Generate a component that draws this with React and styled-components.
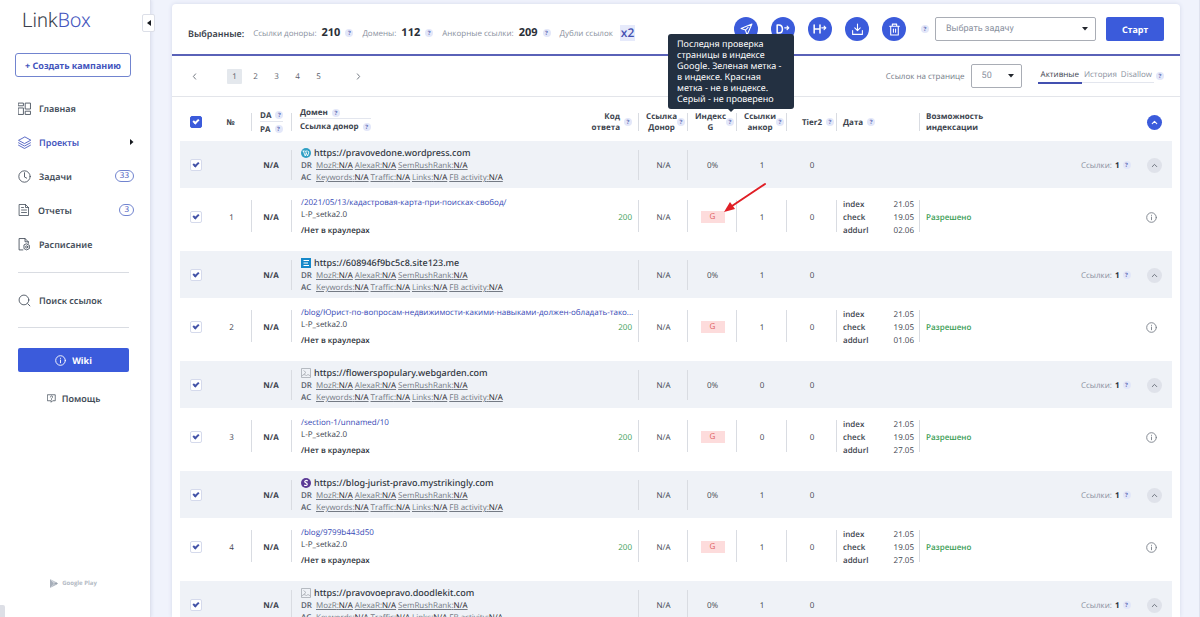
import React from "react";
import styled, { createGlobalStyle, css } from "styled-components";

const c = {
  blue: "#3b5bdb",
  indigo: "#4355bd",
  text: "#3c434d",
  dark: "#2b3038",
  muted: "#8a919e",
  line: "#d9dce2",
  green: "#3a9d55",
  page: "#f0f3fc",
  row: "#eff2f7",
};

const titleFont = `"Noto Sans", "Open Sans", sans-serif`;
const bodyFont = `"Open Sans", "Noto Sans", sans-serif`;

const GlobalStyle = createGlobalStyle`
  *, *::before, *::after { box-sizing: border-box; }
  body { margin: 0; background: ${c.page}; }
  body, button, select, input {
    font-family: ${bodyFont};
    font-size: 8px;
    color: ${c.text};
    text-rendering: geometricPrecision;
  }
  button { padding: 0; border: 0; background: none; cursor: pointer; }
  a { color: inherit; text-decoration: none; }
  svg { display: block; flex: none; }
`;

const Page = styled.div`
  display: flex;
  height: 100vh;
  overflow: hidden;
`;

/* ---------- sidebar ---------- */

const Sidebar = styled.aside`
  position: relative;
  flex: none;
  display: flex;
  flex-direction: column;
  width: 151px;
  padding: 8px 21px 28px 18px;
  background: #fff;
  border-right: 1px solid #dfe2ee;
  box-shadow: 1px 0 3px #dde1f0;
`;

const Logo = styled.a`
  padding-left: 4px;
  font: 300 20px/24px Roboto, sans-serif;
  color: #3a3f4c;
  span { color: ${c.indigo}; }
`;

const CollapseButton = styled.button`
  position: absolute;
  top: 14px;
  right: -5px;
  display: grid;
  place-items: center;
  width: 13px;
  height: 18px;
  background: #fff;
  border: 1px solid #dcdfe8;
  border-radius: 2px;
`;

const CreateButton = styled.button`
  height: 24px;
  margin: 21px -2px 14px -3px;
  border: 1px solid #7184cf;
  border-radius: 3px;
  font-family: ${titleFont};
  font-size: 9px;
  font-weight: 700;
  color: ${c.indigo};
  white-space: nowrap;
`;

const Menu = styled.nav`
  display: flex;
  flex-direction: column;
  margin: 0 -5px 1px 0;
`;

const MenuItem = styled.a`
  display: flex;
  align-items: center;
  gap: 8px;
  height: 34px;
  font-family: ${titleFont};
  font-size: 9px;
  font-weight: 600;
  color: ${(p) => (p.$active ? c.indigo : "#434d59")};
`;

const MenuLabel = styled.span`
  flex: 1;
`;

const Count = styled.span`
  padding: 0 4px;
  border: 1px solid #7184cf;
  border-radius: 6px;
  font-size: 8px;
  line-height: 10px;
  font-weight: 400;
  color: ${c.indigo};
`;

const Rule = styled.hr`
  width: 100%;
  margin: 10px 0;
  border: 0;
  border-top: 1px solid ${c.line};
`;

const WikiButton = styled.button`
  display: flex;
  align-items: center;
  justify-content: center;
  gap: 6px;
  height: 24px;
  margin-top: 10px;
  border-radius: 2px;
  background: ${c.blue};
  color: #fff;
  font-family: ${titleFont};
  font-size: 9px;
  font-weight: 700;
`;

const HelpLink = styled(MenuItem)`
  justify-content: center;
  gap: 6px;
  margin-top: 9px;
`;

const StoreLink = styled.a`
  display: flex;
  align-items: center;
  justify-content: center;
  gap: 4px;
  margin-top: auto;
  font-size: 6px;
  line-height: 12px;
  font-weight: 700;
  color: #b3bac4;
`;

const CornerTab = styled.div`
  position: absolute;
  left: 0;
  bottom: 0;
  width: 5px;
  height: 12px;
  background: #dddfe6;
  border-radius: 0 2px 0 0;
`;

/* ---------- card ---------- */

const Main = styled.main`
  flex: 1;
  min-width: 0;
  padding: 4px 19px 0 21px;
  border-right: 1px solid #dfe2ee;
`;

const Card = styled.section`
  height: 100%;
  background: #fff;
  border-radius: 4px 4px 0 0;
  box-shadow: 0 0 4px #d3d8ea;
  overflow: hidden;
`;

const TopBar = styled.header`
  display: flex;
  align-items: center;
  justify-content: space-between;
  height: 52px;
  padding: 0 16px;
  border-bottom: 2px solid #5a62b8;
`;

const Stats = styled.div`
  display: flex;
  align-items: center;
  gap: 9px;
  padding-top: 8px;
  white-space: nowrap;
`;

const StatsTitle = styled.strong`
  font-family: ${titleFont};
  font-size: 9px;
  font-weight: 600;
  color: ${c.text};
`;

const Stat = styled.span`
  display: flex;
  align-items: center;
  gap: 5px;
  color: ${c.muted};
  b {
    font-size: 11px;
    line-height: 16px;
    font-weight: 700;
    color: ${c.dark};
  }
`;

const Duplicates = styled.button`
  margin-left: 2px;
  padding: 0 1px;
  background: #e6eafb;
  color: #4350b0;
  font-size: 12px;
  line-height: 16px;
  font-weight: 600;
`;

const Actions = styled.div`
  display: flex;
  align-items: center;
  gap: 6px;
`;

const RoundButtons = styled.div`
  display: flex;
  gap: 13px;
  margin-right: 9px;
`;

const RoundButton = styled.button`
  display: grid;
  place-items: center;
  width: 24px;
  height: 24px;
  border-radius: 50%;
  background: ${c.blue};
`;

const HelpDot = styled.button`
  flex: none;
  position: relative;
  width: 8px;
  height: 8px;
  border-radius: 50%;
  background: #e3e7f9;
  color: #5f6cb5;
  font-size: 6px;
  line-height: 8px;
  font-weight: 700;
`;

const SelectBox = styled.label`
  position: relative;
  display: block;
  width: ${(p) => (p.$small ? "51px" : "161px")};
  svg { position: absolute; right: 8px; top: 10px; pointer-events: none; }
  select {
    appearance: none;
    display: block;
    width: 100%;
    height: 24px;
    padding: 0 10px;
    border: 1px solid #a9adb5;
    border-radius: 2px;
    background: #fff;
    font-family: Roboto, sans-serif;
    font-size: 9px;
    color: ${c.muted};
  }
`;

const StartButton = styled.button`
  width: 58px;
  height: 24px;
  margin-left: 4px;
  border-radius: 2px;
  background: ${c.blue};
  color: #fff;
  font-family: ${titleFont};
  font-size: 9px;
  font-weight: 700;
`;

const PagerBar = styled.div`
  display: flex;
  align-items: center;
  justify-content: space-between;
  height: 41px;
  padding: 0 16px 0 15px;
  border-bottom: 1px solid #e3e5ea;
`;

const Pager = styled.nav`
  display: flex;
  align-items: center;
  gap: 25px;
`;

const Pages = styled.div`
  display: flex;
  gap: 6px;
`;

const PageButton = styled.button`
  display: grid;
  place-items: center;
  width: 15px;
  height: 15px;
  border-radius: 1px;
  background: ${(p) => (p.$active ? "#e4e8ed" : "transparent")};
  color: #59606b;
`;

const PerPage = styled.div`
  display: flex;
  align-items: center;
  gap: 6px;
  color: #747b87;
`;

const Tabs = styled.div`
  display: flex;
  align-items: center;
  margin-left: 10px;
  ${HelpDot} { margin-left: 2px; }
`;

const Tab = styled.a`
  align-self: flex-start;
  padding: 0 ${(p) => (p.$active ? 3 : 2)}px;
  line-height: 14px;
  border-bottom: ${(p) => (p.$active ? "2px solid #4350b0" : "1px solid #e3e6ee")};
  color: ${(p) => (p.$active ? c.text : c.muted)};
`;

/* ---------- table ---------- */

const Table = styled.table`
  width: calc(100% - 16px);
  margin: 0 8px;
  table-layout: fixed;
  border-collapse: collapse;
`;

const divider = css`
  background-image: linear-gradient(${c.line}, ${c.line});
  background-repeat: no-repeat;
`;

const HeadRow = styled.tr`
  height: 44px;
`;

const HeadCell = styled.th`
  padding: 6px ${(p) => p.$padRight ?? p.$pad ?? 0}px 0 ${(p) => p.$pad || 0}px;
  font-weight: 700;
  line-height: 11px;
  text-align: ${(p) => p.$align || "center"};
  color: ${c.text};
  ${(p) => p.$divided && divider}
  background-size: 1px 18px;
  background-position: 0 16px;
`;

const HeadLabel = styled.span`
  display: flex;
  align-items: center;
  justify-content: ${(p) => (p.$start ? "flex-start" : "flex-end")};
  gap: ${(p) => (p.$tight ? 0 : 4)}px;
  padding-right: ${(p) => (p.$start ? 0 : 2)}px;
`;

const Stacked = styled.div`
  display: grid;
  justify-items: start;
  margin-bottom: ${(p) => (p.$raised ? 5 : 0)}px;
  > * + * { border-top: 1px solid #e3e6ee; padding-top: 2px; }
`;

const Split = styled.div`
  display: flex;
  align-items: center;
  justify-content: space-between;
`;

const CodeLabel = styled.span`
  text-align: right;
`;

const GroupRow = styled.tr`
  height: 47px;
  background-color: ${c.row};
  td { padding-top: 1px; }
`;

const LinkRow = styled.tr`
  height: 63px;
  td { padding-bottom: 5px; }
`;

const Cell = styled.td`
  padding: 0 ${(p) => p.$padRight ?? p.$pad ?? 0}px 0 ${(p) => p.$pad ?? 2}px;
  text-align: ${(p) => p.$align || "center"};
  vertical-align: middle;
  ${(p) => p.$divided && divider}
  background-size: 1px 32px;
  background-position: 0 12px;
  ${GroupRow} & {
    background-size: 1px 30px;
    background-position: 0 9px;
  }
`;

const Check = styled.input.attrs({ type: "checkbox" })`
  appearance: none;
  display: grid;
  place-items: center;
  width: 12px;
  height: 12px;
  margin: 0 0 0 10px;
  border: 1px solid ${(p) => (p.$solid ? c.blue : "#d5daec")};
  border-radius: 2px;
  background: ${(p) => (p.$solid ? c.blue : "#fff")};
  &:checked::after {
    content: "";
    width: 6px;
    height: 4px;
    margin-bottom: 2px;
    border: solid ${(p) => (p.$solid ? "#fff" : "#4453a8")};
    border-width: 0 0 2px 2px;
    transform: rotate(-45deg);
  }
`;

const DomainTitle = styled.a`
  display: flex;
  align-items: center;
  gap: 3px;
  font-family: ${titleFont};
  font-size: 9px;
  line-height: 14px;
  font-weight: 500;
  color: #30363e;
`;

const Metrics = styled.div`
  display: flex;
  gap: 2px;
  line-height: 12px;
  color: #747a84;
  strong { width: 13px; font-weight: 600; color: #59606b; }
  a { text-decoration: underline; }
  b { font-weight: 500; color: #1f242b; }
`;

const LinkBody = styled.div`
  display: grid;
  grid-template-columns: minmax(0, 1fr) auto;
  line-height: 12px;
`;

const LinkPath = styled.a`
  grid-column: 1 / -1;
  white-space: nowrap;
  font-weight: 500;
  color: #3548b5;
`;

const Note = styled.span`
  padding-top: 4px;
  font-weight: 600;
  color: ${c.dark};
`;

const Status = styled.span`
  grid-column: 2;
  grid-row: 2 / span 2;
  padding-top: 3px;
  font-weight: 500;
  color: ${c.green};
`;

const Allowed = styled.span`
  font-weight: 600;
  color: ${c.green};
`;

const Badge = styled.span`
  position: relative;
  display: inline-block;
  width: 24px;
  line-height: 12px;
  background: #fddcdc;
  color: #e0605f;
`;

const Pointer = styled.svg`
  position: absolute;
  left: 21px;
  top: -29px;
`;

const Dates = styled.dl`
  display: grid;
  grid-template-columns: auto auto;
  justify-content: space-between;
  margin: 0;
  line-height: 13px;
  dt { font-weight: 600; }
  dd { margin: 0; }
`;

const LinkCount = styled.span`
  display: flex;
  align-items: center;
  gap: 3px;
  padding-left: 1px;
  color: ${c.muted};
  b { font-weight: 700; color: ${c.dark}; }
`;

const Toggle = styled.button`
  display: grid;
  place-items: center;
  width: 15px;
  height: 15px;
  border-radius: 50%;
  background: ${(p) => (p.$solid ? c.blue : "#dfe2ea")};
  color: ${(p) => (p.$solid ? "#fff" : "#59606b")};
`;

const RightSide = styled.div`
  display: flex;
  justify-content: flex-end;
  padding-right: ${(p) => p.$inset || 10}px;
`;

const InfoButton = styled.button`
  color: #7b818b;
`;

const Tooltip = styled.span`
  position: absolute;
  z-index: 5;
  left: 50%;
  bottom: 17px;
  width: 126px;
  margin-left: -62px;
  padding: 4px 8px 5px 9px;
  border-radius: 3px;
  background: #233041;
  color: #fff;
  font-family: ${titleFont};
  font-size: 9px;
  line-height: 11px;
  font-weight: 400;
  text-align: left;
  &::after {
    content: "";
    position: absolute;
    left: 60px;
    top: 100%;
    border: 3px solid transparent;
    border-top-color: #233041;
  }
`;

/* ---------- icons ---------- */

const Icon = ({ size = 12, width = 1.6, children, ...rest }) => (
  <svg width={size} height={size} viewBox="0 0 24 24" fill="none" stroke="currentColor"
    strokeWidth={width} strokeLinecap="round" strokeLinejoin="round" aria-hidden="true" {...rest}>
    {children}
  </svg>
);

const DashboardIcon = () => (
  <Icon size={13}><path d="M1 2h9v5H1zM1 11h9v12H1zM14 2h9v11h-9zM14 17h9v6h-9z" /></Icon>
);
const LayersIcon = () => (
  <Icon size={13}><path d="M12 2 1 8l11 6 11-6zM1 12.500l11 6 11-6M1 17l11 6 11-6" /></Icon>
);
const ClockIcon = () => (
  <Icon size={13}><circle cx="12" cy="12" r="10.500" /><path d="M12 5v8l4 2" /></Icon>
);
const ReportIcon = () => (
  <Icon><path d="M3 1h12l6 6v16H3zM15 1v6h6M7 7h4M7 12h10M7 17h10" /></Icon>
);
const ScheduleIcon = () => (
  <Icon size={13}>
    <path d="M9 22H2V1h11l6 6v3M13 1v6h6" />
    <path d="m16 11 5 2.500v6L16 22l-5-2.500v-6z" /><circle cx="16" cy="16.500" r="2" />
  </Icon>
);
const SearchIcon = () => (
  <Icon size={13}><circle cx="11" cy="11" r="9" /><path d="m18 18 4 4" /></Icon>
);
const InfoIcon = ({ size, width }) => (
  <Icon size={size} width={width}><circle cx="12" cy="12" r="10.500" /><path d="M12 11v6M12 7v.500" /></Icon>
);
const ChatIcon = () => (
  <Icon size={9} width={2}><path d="M2 2h20v16h-7l-4 4v-4H2zM9 8c0-4 6-4 6 0 0 2-3 2-3 4M12 15v.300" /></Icon>
);
const PlayIcon = () => (
  <svg width="8" height="9" viewBox="0 0 8 9" aria-hidden="true">
    <path d="M0 0v9l4-4.500z" fill="#a7afba" /><path d="M0 0l4 4.500L6 3z" fill="#c5cad2" />
    <path d="M0 9l4-4.500L6 6z" fill="#b5bcc6" /><path d="M6 3l2 1.500L6 6 4 4.500z" fill="#9aa3ae" />
  </svg>
);
const Caret = () => (
  <svg width="6" height="4" viewBox="0 0 6 4" aria-hidden="true"><path d="M0 0h6L3 3.500z" fill="#22262d" /></svg>
);
const SideCaret = ({ left }) => (
  <svg width="4" height="6" viewBox="0 0 4 6" aria-hidden="true">
    <path d={left ? "M4 0v6L0 3z" : "M0 0v6l3.500-3z"} fill="#16191f" />
  </svg>
);
const Chevron = ({ d, size = 9, width = 2.2 }) => <Icon size={size} width={width}><path d={d} /></Icon>;

const White = ({ children, size = 13 }) => <Icon size={size} width={2} color="#fff">{children}</Icon>;
const SendIcon = () => <White><path d="M22 2 2 10l8 3 3 9zM10 13l5-5" /></White>;
const DomainIcon = () => (
  <White size={14}><path strokeWidth="2.600" d="M2 5h3c8 0 8 14 0 14H2z" /><path d="M15 10h7M19 7l3 3-3 3" /></White>
);
const HostIcon = () => (
  <White size={14}><path strokeWidth="2.600" d="M2 5v14M12 5v14M2 12h10" /><path d="M15 10h7M19 7l3 3-3 3" /></White>
);
const DownloadIcon = () => <White><path d="M12 2v12M7 9l5 5 5-5M3 14v7h18v-7" /></White>;
const TrashIcon = () => <White><path d="M3 6h18M8 6V2h8v4M5 6v16h14V6M10 11v6M14 11v6" /></White>;

const favicons = {
  wordpress: (
    <svg width="10" height="10" viewBox="0 0 20 20" aria-hidden="true">
      <circle cx="10" cy="10" r="10" fill="#2f9fc4" />
      <path d="M3 6h4.500M9 6h4.500M4.500 6l4 10 2-6-1.500-4M10.500 10l2.500 6 2.500-6c.500-2-1-3-1-4" fill="none" stroke="#fff" strokeWidth="1.700" />
    </svg>
  ),
  site: (
    <svg width="10" height="10" viewBox="0 0 20 20" aria-hidden="true">
      <path d="M0 0h20v20H0z" fill="#1688c9" /><path d="M5 5h11M5 10h9M5 15h11" stroke="#fff" strokeWidth="2.200" />
    </svg>
  ),
  strikingly: (
    <svg width="10" height="10" viewBox="0 0 20 20" aria-hidden="true">
      <circle cx="10" cy="10" r="10" fill="#5b3a96" />
      <path d="M13.500 6C10 3.500 6 6 8 8.500c1.500 1.500 4.500 1.500 4.500 4S8.500 16 6.500 14" fill="none" stroke="#fff" strokeWidth="2.300" />
    </svg>
  ),
  missing: (
    <svg width="10" height="10" viewBox="0 0 20 20" fill="none" stroke="#a6abb3" strokeWidth="1.600" aria-hidden="true">
      <path d="M1 1h18v18H1zM5 5l5 4-5 4M1 16l5-3 5 2 3-2 5 3" />
    </svg>
  ),
};

/* ---------- data ---------- */

const groups = [
  { icon: "wordpress", domain: "https://pravovedone.wordpress.com", anchors: 1, path: "/2021/05/13/кадастровая-карта-при-поисках-свобод/", added: "02.06" },
  { icon: "site", domain: "https://608946f9bc5c8.site123.me", anchors: 1, path: "/blog/Юрист-по-вопросам-недвижимости-какими-навыками-должен-обладать-тако...", added: "01.06" },
  { icon: "missing", domain: "https://flowerspopulary.webgarden.com", anchors: 0, path: "/section-1/unnamed/10", added: "27.05" },
  { icon: "strikingly", domain: "https://blog-jurist-pravo.mystrikingly.com", anchors: 1, path: "/blog/9799b443d50", added: "27.05" },
  { icon: "missing", domain: "https://pravovoepravo.doodlekit.com", anchors: 1 },
];

const Help = ({ children }) => <HelpDot type="button" aria-label="Подсказка">?{children}</HelpDot>;

const Metric = ({ name }) => <a href="#metric">{name}:<b>N/A</b></a>;

function Group({ group, index }) {
  return (
    <>
      <GroupRow>
        <Cell $pad={0}><Check defaultChecked aria-label={group.domain} /></Cell>
        <Cell />
        <Cell $pad={0}><b>N/A</b></Cell>
        <Cell $divided $align="left" $pad={10}>
          <DomainTitle href="#domain">{favicons[group.icon]}{group.domain}</DomainTitle>
          <Metrics><strong>DR</strong><Metric name="MozR" /><Metric name="AlexaR" /><Metric name="SemRushRank" /></Metrics>
          <Metrics><strong>AC</strong><Metric name="Keywords" /><Metric name="Traffic" /><Metric name="Links" /><Metric name="FB activity" /></Metrics>
        </Cell>
        <Cell $divided>N/A</Cell>
        <Cell $divided>0%</Cell>
        <Cell>{group.anchors}</Cell>
        <Cell>0</Cell>
        <Cell />
        <Cell />
        <Cell $pad={0}>
          <Split>
            <LinkCount>Ссылки: <b>1</b><Help /></LinkCount>
            <RightSide><Toggle type="button" aria-label="Свернуть"><Chevron d="m6 15 6-6 6 6" /></Toggle></RightSide>
          </Split>
        </Cell>
      </GroupRow>
      {group.path && (
        <LinkRow>
          <Cell $pad={0}><Check defaultChecked aria-label={group.path} /></Cell>
          <Cell>{index + 1}</Cell>
          <Cell $divided $pad={0}><b>N/A</b></Cell>
          <Cell $divided $align="left" $pad={10} $padRight={6}>
            <LinkBody>
              <LinkPath href="#link">{group.path}</LinkPath>
              <span>L-P_setka2.0</span>
              <Note>/Нет в краулерах</Note>
              <Status>200</Status>
            </LinkBody>
          </Cell>
          <Cell $divided>N/A</Cell>
          <Cell $divided>
            <Badge>
              G
              {index === 0 && (
                <Pointer width="46" height="34" viewBox="0 0 46 34" aria-hidden="true">
                  <path d="M43 2 10 24" stroke="#e01f26" strokeWidth="2" strokeLinecap="round" />
                  <path d="M2 30l6-10 5 7z" fill="#e01f26" />
                </Pointer>
              )}
            </Badge>
          </Cell>
          <Cell $divided>{group.anchors}</Cell>
          <Cell $divided>0</Cell>
          <Cell $divided $pad={7} $padRight={5} $align="left">
            <Dates>
              <dt>index</dt><dd>21.05</dd>
              <dt>check</dt><dd>19.05</dd>
              <dt>addurl</dt><dd>{group.added}</dd>
            </Dates>
          </Cell>
          <Cell $divided $align="left" $pad={7}><Allowed>Разрешено</Allowed></Cell>
          <Cell $pad={0}>
            <RightSide $inset={15}>
              <InfoButton type="button" aria-label="Информация"><InfoIcon size={11} width={2} /></InfoButton>
            </RightSide>
          </Cell>
        </LinkRow>
      )}
    </>
  );
}

export default function App() {
  return (
    <Page>
      <GlobalStyle />
      <Sidebar>
        <Logo href="#home">Link<span>Box</span></Logo>
        <CollapseButton type="button" aria-label="Свернуть меню"><SideCaret left /></CollapseButton>
        <CreateButton type="button">+ Создать кампанию</CreateButton>
        <Menu>
          <MenuItem href="#main"><DashboardIcon /><MenuLabel>Главная</MenuLabel></MenuItem>
          <MenuItem href="#projects" $active><LayersIcon /><MenuLabel>Проекты</MenuLabel><SideCaret /></MenuItem>
          <MenuItem href="#tasks"><ClockIcon /><MenuLabel>Задачи</MenuLabel><Count>33</Count></MenuItem>
          <MenuItem href="#reports"><ReportIcon /><MenuLabel>Отчеты</MenuLabel><Count>3</Count></MenuItem>
          <MenuItem href="#schedule"><ScheduleIcon /><MenuLabel>Расписание</MenuLabel></MenuItem>
        </Menu>
        <Rule />
        <MenuItem href="#search"><SearchIcon /><MenuLabel>Поиск ссылок</MenuLabel></MenuItem>
        <Rule />
        <WikiButton type="button"><InfoIcon size={11} width={2} />Wiki</WikiButton>
        <HelpLink href="#help"><ChatIcon />Помощь</HelpLink>
        <StoreLink href="#store"><PlayIcon />Google Play</StoreLink>
        <CornerTab />
      </Sidebar>

      <Main>
        <Card>
          <TopBar>
            <Stats>
              <StatsTitle>Выбранные:</StatsTitle>
              <Stat>Ссылки доноры: <b>210</b><Help /></Stat>
              <Stat>Домены: <b>112</b><Help /></Stat>
              <Stat>Анкорные ссылки: <b>209</b><Help /></Stat>
              <Stat>Дубли ссылок <Duplicates type="button">x2</Duplicates></Stat>
            </Stats>
            <Actions>
              <RoundButtons>
                <RoundButton type="button" aria-label="Отправить"><SendIcon /></RoundButton>
                <RoundButton type="button" aria-label="Домены"><DomainIcon /></RoundButton>
                <RoundButton type="button" aria-label="Хосты"><HostIcon /></RoundButton>
                <RoundButton type="button" aria-label="Скачать"><DownloadIcon /></RoundButton>
                <RoundButton type="button" aria-label="Удалить"><TrashIcon /></RoundButton>
              </RoundButtons>
              <Help />
              <SelectBox>
                <select aria-label="Задача"><option>Выбрать задачу</option></select>
                <Caret />
              </SelectBox>
              <StartButton type="button">Старт</StartButton>
            </Actions>
          </TopBar>

          <PagerBar>
            <Pager>
              <PageButton type="button" aria-label="Назад"><Chevron d="m15 5-6 7 6 7" /></PageButton>
              <Pages>
                {[1, 2, 3, 4, 5].map((n) => (
                  <PageButton key={n} type="button" $active={n === 1}>{n}</PageButton>
                ))}
              </Pages>
              <PageButton type="button" aria-label="Вперед"><Chevron d="m9 5 6 7-6 7" /></PageButton>
            </Pager>
            <PerPage>
              <label htmlFor="per-page">Ссылок на странице</label>
              <SelectBox $small as="div">
                <select id="per-page"><option>50</option></select>
                <Caret />
              </SelectBox>
              <Tabs>
                <Tab href="#active" $active>Активные</Tab>
                <Tab href="#history">История</Tab>
                <Tab href="#disallow">Disallow</Tab>
                <Help />
              </Tabs>
            </PerPage>
          </PagerBar>

          <Table>
            <colgroup>
              <col width="30" /><col width="41" /><col width="40" /><col />
              <col width="49" /><col width="49" /><col width="50" /><col width="50" />
              <col width="83" /><col width="161" /><col width="92" />
            </colgroup>
            <thead>
              <HeadRow>
                <HeadCell><Check $solid defaultChecked aria-label="Выбрать все" /></HeadCell>
                <HeadCell>№</HeadCell>
                <HeadCell $divided $pad={9} $padRight={0}>
                  <Stacked>
                    <HeadLabel $start>DA <Help /></HeadLabel>
                    <HeadLabel $start>PA <Help /></HeadLabel>
                  </Stacked>
                </HeadCell>
                <HeadCell $divided $pad={9} $padRight={4} $align="left">
                  <Split>
                    <Stacked $raised>
                      <HeadLabel $start>Домен <Help /></HeadLabel>
                      <HeadLabel $start>Ссылка донор <Help /></HeadLabel>
                    </Stacked>
                    <HeadLabel><CodeLabel>Код<br />ответа</CodeLabel><Help /></HeadLabel>
                  </Split>
                </HeadCell>
                <HeadCell $divided><HeadLabel $tight><span>Ссылка<br />Донор</span><Help /></HeadLabel></HeadCell>
                <HeadCell $divided>
                  <HeadLabel $tight>
                    <span>Индекс<br />G</span>
                    <Help>
                      <Tooltip role="tooltip">
                        Последня проверка страницы в индексе Google. Зеленая метка - в индексе. Красная метка - не в индексе. Серый - не проверено
                      </Tooltip>
                    </Help>
                  </HeadLabel>
                </HeadCell>
                <HeadCell $divided><HeadLabel $tight><span>Ссылки<br />анкор</span><Help /></HeadLabel></HeadCell>
                <HeadCell $divided><HeadLabel>Tier2<Help /></HeadLabel></HeadCell>
                <HeadCell $divided $pad={7}><HeadLabel $start>Дата<Help /></HeadLabel></HeadCell>
                <HeadCell $divided $pad={7} $align="left">Возможность<br />индексации</HeadCell>
                <HeadCell>
                  <RightSide>
                    <Toggle $solid type="button" aria-label="Свернуть все"><Chevron d="m6 15 6-6 6 6" width={3} /></Toggle>
                  </RightSide>
                </HeadCell>
              </HeadRow>
            </thead>
            <tbody>
              {groups.map((g, i) => <Group key={g.domain} group={g} index={i} />)}
            </tbody>
          </Table>
        </Card>
      </Main>
    </Page>
  );
}
